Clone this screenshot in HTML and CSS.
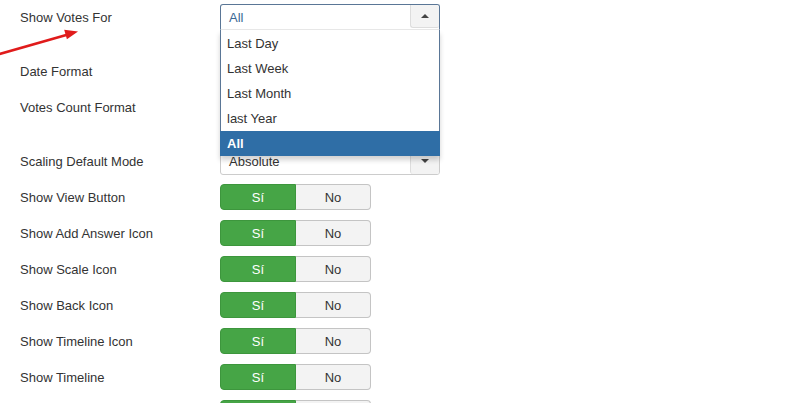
FILE: index.html
```html
<!DOCTYPE html>
<html>
<head>
<meta charset="utf-8">
<link rel="stylesheet" href="styles.css">
</head>
<body>
<svg class="arrow" width="90" height="60" viewBox="0 0 90 60">
  <line x1="-2" y1="54.5" x2="68" y2="34.5" stroke="#e01b1b" stroke-width="2.6"/>
  <polygon points="78,31.5 64.2,29.7 66.9,39.3" fill="#e01b1b"/>
</svg>
<div class="form">
  <div class="row r1">
    <label class="lbl">Show Votes For</label>
    <div class="ctrl">
      <div class="select open">
        <span class="val blue">All</span>
        <span class="btn"><span class="caret up"></span></span>
      </div>
      <ul class="drop">
        <li>Last Day</li>
        <li>Last Week</li>
        <li>Last Month</li>
        <li>last Year</li>
        <li class="sel">All</li>
      </ul>
    </div>
  </div>
  <div class="row">
    <label class="lbl">Date Format</label>
  </div>
  <div class="row r3">
    <label class="lbl">Votes Count Format</label>
  </div>
  <div class="row">
    <label class="lbl">Scaling Default Mode</label>
    <div class="ctrl">
      <div class="select">
        <span class="val">Absolute</span>
        <span class="btn"><span class="caret down"></span></span>
      </div>
    </div>
  </div>
  <div class="row">
    <label class="lbl">Show View Button</label>
    <div class="toggle"><span class="yes">Sí</span><span class="no">No</span></div>
  </div>
  <div class="row">
    <label class="lbl">Show Add Answer Icon</label>
    <div class="toggle"><span class="yes">Sí</span><span class="no">No</span></div>
  </div>
  <div class="row">
    <label class="lbl">Show Scale Icon</label>
    <div class="toggle"><span class="yes">Sí</span><span class="no">No</span></div>
  </div>
  <div class="row">
    <label class="lbl">Show Back Icon</label>
    <div class="toggle"><span class="yes">Sí</span><span class="no">No</span></div>
  </div>
  <div class="row">
    <label class="lbl">Show Timeline Icon</label>
    <div class="toggle"><span class="yes">Sí</span><span class="no">No</span></div>
  </div>
  <div class="row">
    <label class="lbl">Show Timeline</label>
    <div class="toggle"><span class="yes">Sí</span><span class="no">No</span></div>
  </div>
  <div class="row">
    <label class="lbl"></label>
    <div class="toggle"><span class="yes"></span><span class="no"></span></div>
  </div>
</div>
</body>
</html>
```
FILE: styles.css
```css
html, body {
  margin: 0;
  padding: 0;
  background: #fff;
  overflow: hidden;
}
body {
  font-family: "Liberation Sans", Arial, sans-serif;
  font-size: 13px;
  color: #333;
  position: relative;
  height: 403px;
}
.arrow {
  position: absolute;
  left: 0;
  top: 0;
  z-index: 3;
}
.form {
  padding-left: 20px;
}
.row {
  display: flex;
  align-items: center;
  height: 36px;
}
.row.r1 {
  height: 34px;
  margin-bottom: 19px;
}
.row.r3 {
  margin-bottom: 18px;
}
.lbl {
  width: 200px;
  flex: none;
}
.ctrl {
  position: relative;
  width: 220px;
}
.select {
  box-sizing: border-box;
  height: 27px;
  border: 1px solid #ccc;
  border-radius: 3px;
  display: flex;
  align-items: center;
  justify-content: space-between;
  background: #fff;
}
.r1 .select {
  height: 26px;
}
.select.open {
  border-color: #5a7696;
  border-bottom-color: #e8e8e8;
  border-radius: 3px 3px 0 0;
}
.val {
  padding-left: 8px;
}
.val.blue {
  color: #3a6794;
}
.btn {
  align-self: stretch;
  width: 28px;
  background: #f3f3f3;
  border-left: 1px solid #ddd;
  border-radius: 0 2px 2px 3px;
  display: flex;
  align-items: center;
  justify-content: center;
}
.open .btn {
  border-bottom: 1px solid #ddd;
  margin-bottom: 1px;
}
.caret {
  width: 0;
  height: 0;
  border-left: 4px solid transparent;
  border-right: 4px solid transparent;
}
.caret.up {
  border-bottom: 4px solid #444;
}
.caret.down {
  border-top: 4px solid #444;
}
.drop {
  position: absolute;
  left: 0;
  top: 26px;
  width: 220px;
  box-sizing: border-box;
  margin: 0;
  padding: 1px 0 0;
  list-style: none;
  background: #fff;
  border: 1px solid #5a7696;
  border-top: none;
  box-shadow: 0 4px 5px rgba(0,0,0,0.18);
  z-index: 2;
}
.drop li {
  height: 25px;
  line-height: 25px;
  padding-left: 6px;
}
.drop li.sel {
  background: #2f6ea6;
  color: #fff;
  font-weight: bold;
  margin: 0 -1px -1px;
  padding-left: 7px;
}
.toggle {
  display: flex;
  width: 151px;
  height: 26px;
  box-sizing: border-box;
}
.toggle span {
  flex: 1;
  display: flex;
  align-items: center;
  justify-content: center;
}
.toggle .yes {
  background: #46a546;
  color: #fff;
  border-radius: 4px 0 0 4px;
  border: 1px solid #3d963d;
}
.toggle .no {
  background: #f3f3f3;
  border: 1px solid #c4c4c4;
  border-left: none;
  border-radius: 0 4px 4px 0;
}
```
